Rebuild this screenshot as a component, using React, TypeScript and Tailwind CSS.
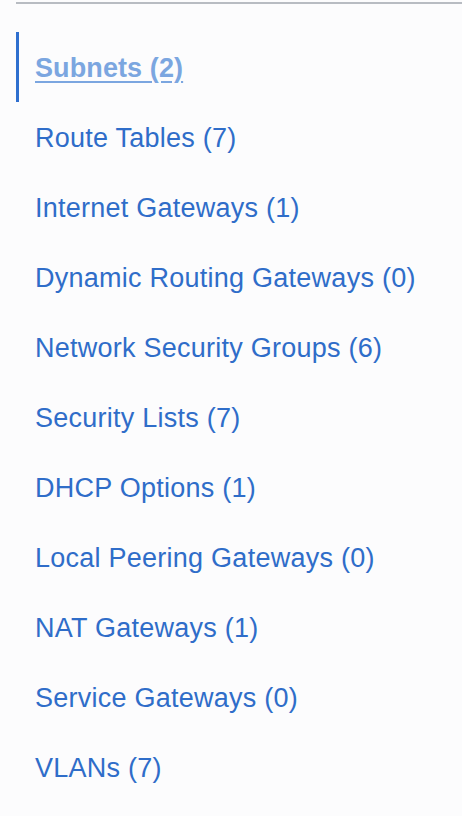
export default function App() {
  const items = [
    "Subnets (2)",
    "Route Tables (7)",
    "Internet Gateways (1)",
    "Dynamic Routing Gateways (0)",
    "Network Security Groups (6)",
    "Security Lists (7)",
    "DHCP Options (1)",
    "Local Peering Gateways (0)",
    "NAT Gateways (1)",
    "Service Gateways (0)",
    "VLANs (7)",
  ];
  return (
    <div
      className="w-[462px] h-[816px] bg-[#fcfcfd] pl-4 pt-[2px] overflow-hidden"
      style={{ fontFamily: '"Liberation Sans", Arial, sans-serif' }}
    >
      <div className="border-t-2 border-[#b8bcc2]" />
      <ul className="mt-[28px]">
        {items.map((t, i) => (
          <li
            key={t}
            className={
              "h-[70px] flex items-center pl-4 pt-[2px] border-l-[3px] " +
              (i === 0 ? "border-[#2f6fcf]" : "border-transparent")
            }
          >
            <a
              className={
                i === 0
                  ? "text-[27px] font-bold tracking-[0.1px] text-[#7ba6e0] underline underline-offset-[4px] decoration-2"
                  : "text-[27px] tracking-[0.25px] text-[#2f6dc9]"
              }
            >
              {t}
            </a>
          </li>
        ))}
      </ul>
    </div>
  );
}
